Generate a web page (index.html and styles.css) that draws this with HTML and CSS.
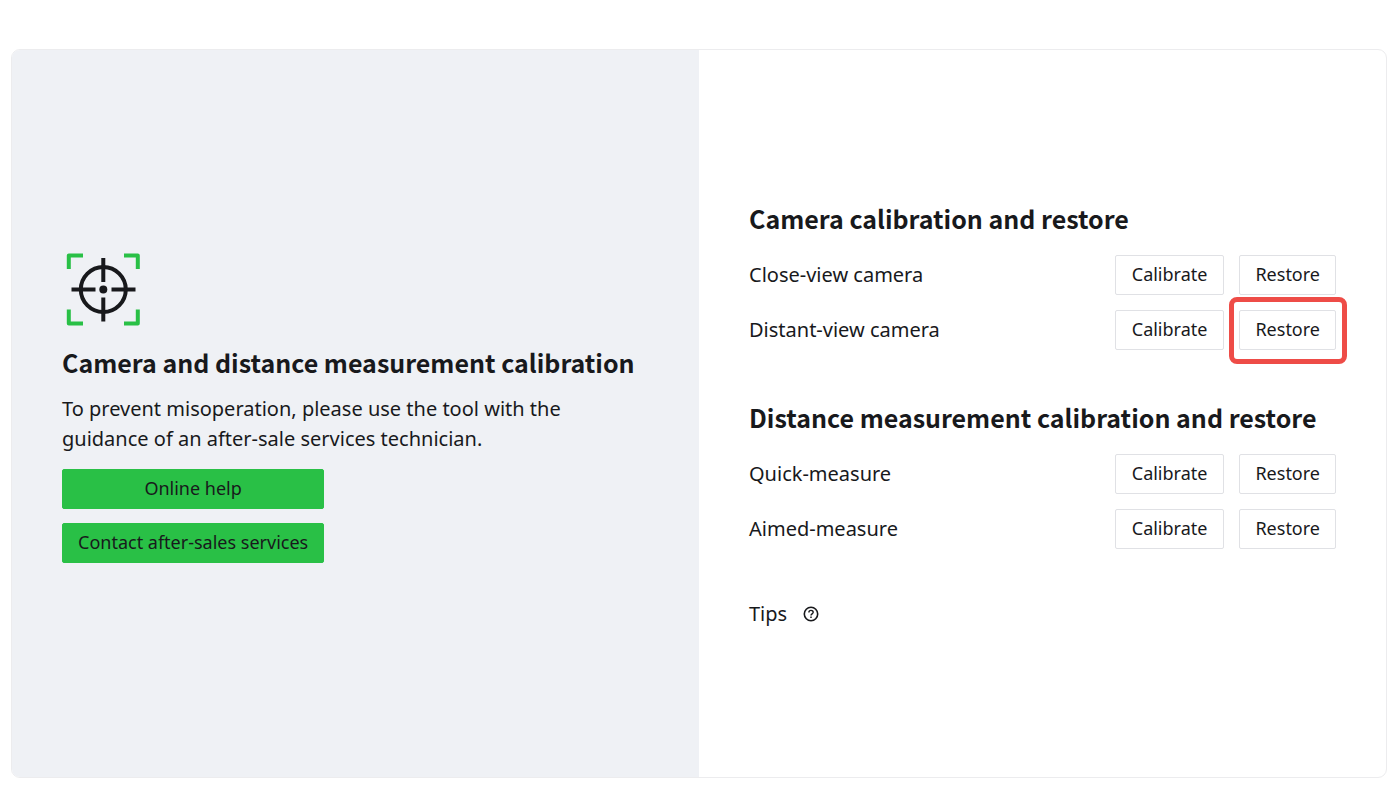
FILE: index.html
```html
<!DOCTYPE html>
<html lang="en">
<head>
<meta charset="utf-8">
<meta name="viewport" content="width=device-width, initial-scale=1">
<title>Camera and distance measurement calibration</title>
<link rel="stylesheet" href="styles.css">
</head>
<body>
<main class="card">
  <section class="intro">
    <svg class="target" viewBox="0 0 82 82" fill="none" aria-hidden="true">
      <path d="M6.800 21V7.500H21M62 7.500H75.800V21M75.800 61.500V75.500H62M21 75.500H6.800V61.500" stroke="#29c046" stroke-width="4" stroke-linejoin="round"/>
      <circle cx="41.300" cy="41.500" r="22.500" stroke="#18191c" stroke-width="4"/>
      <path d="M41.300 10V34M41.300 49.500V73.500M9.500 41.500H33.500M49.500 41.500H73.500" stroke="#18191c" stroke-width="4"/>
      <circle cx="41.300" cy="41.500" r="4" fill="#18191c"/>
    </svg>
    <h1 class="title">Camera and distance measurement calibration</h1>
    <p class="text">To prevent misoperation, please use the tool with the guidance of an after-sale services technician.</p>
    <div class="actions">
      <button class="button primary" type="button">Online help</button>
      <button class="button primary" type="button">Contact after-sales services</button>
    </div>
  </section>
  <section class="panel">
    <div class="group">
      <h2 class="title">Camera calibration and restore</h2>
      <div class="row">
        <span class="label" id="close">Close-view camera</span>
        <button class="button calibrate" type="button" aria-describedby="close">Calibrate</button>
        <button class="button" type="button" aria-describedby="close">Restore</button>
      </div>
      <div class="row">
        <span class="label" id="distant">Distant-view camera</span>
        <button class="button calibrate" type="button" aria-describedby="distant">Calibrate</button>
        <button class="button highlighted" type="button" aria-describedby="distant">Restore</button>
      </div>
    </div>
    <div class="group">
      <h2 class="title">Distance measurement calibration and restore</h2>
      <div class="row">
        <span class="label" id="quick">Quick-measure</span>
        <button class="button calibrate" type="button" aria-describedby="quick">Calibrate</button>
        <button class="button" type="button" aria-describedby="quick">Restore</button>
      </div>
      <div class="row">
        <span class="label" id="aimed">Aimed-measure</span>
        <button class="button calibrate" type="button" aria-describedby="aimed">Calibrate</button>
        <button class="button" type="button" aria-describedby="aimed">Restore</button>
      </div>
    </div>
    <div class="tips">
      <span>Tips</span>
      <button class="help" type="button" aria-label="Show tips">
        <svg class="help-icon" viewBox="0 0 16 16" fill="none" stroke="#18191c" aria-hidden="true">
          <circle cx="8" cy="8" r="6.700" stroke-width="1.600"/>
          <path d="M5.900 6.500C5.900 3.700 10.200 3.800 10.200 6.300C10.200 7.900 8 7.900 8 9.500" stroke-width="1.400"/>
          <path d="M8 10.500V12" stroke-width="1.500"/>
        </svg>
      </button>
    </div>
  </section>
</main>
</body>
</html>
```
FILE: styles.css
```css
* {
  box-sizing: border-box;
}

body {
  margin: 0;
  padding: 49px 13px 30px 11px;
  background: #fff;
  color: #18191c;
  font-family: "Noto Sans", "Open Sans", sans-serif;
  font-size: 20px;
  line-height: 30px;
}

.card {
  display: grid;
  grid-template-columns: 1fr 1fr;
  min-height: calc(100vh - 79px);
  border: 1px solid #ececee;
  border-radius: 9px;
  overflow: hidden;
}

.intro,
.panel {
  display: flex;
  flex-direction: column;
  justify-content: center;
  padding: 0 50px;
}

.intro {
  padding-bottom: 16px;
  background: #eff1f5;
}

.target {
  width: 82px;
  height: 82px;
  margin-bottom: 15px;
}

.title {
  margin: 0;
  font-family: "Noto Sans CJK SC", "Noto Sans", sans-serif;
  font-size: 25px;
  font-weight: 700;
  line-height: 34px;
}

.text {
  max-width: 530px;
  margin: 15px 0;
}

.actions {
  display: grid;
  gap: 14px;
  width: fit-content;
}

.button {
  height: 40px;
  padding: 0 15px 2px;
  border: 1px solid #e0e1e5;
  border-radius: 2px;
  background: #fff;
  color: inherit;
  font-family: inherit;
  font-size: 18px;
  line-height: 24px;
}

.calibrate {
  padding-inline: 16px;
}

.primary {
  border-color: #29c046;
  background: #29c046;
}

.highlighted {
  position: relative;
}

.highlighted::after {
  content: "";
  position: absolute;
  inset: -14px -12px -15px -11px;
  border: 5px solid #ee4c47;
  border-radius: 8px;
}

.panel {
  gap: 50px;
  padding-top: 2px;
}

.group {
  display: grid;
  gap: 15px;
}

.group .title {
  margin-bottom: 5px;
}

.row {
  display: flex;
  align-items: center;
  gap: 15px;
}

.label {
  flex: 1;
}

.tips {
  display: flex;
  align-items: center;
  gap: 16px;
}

.help {
  display: flex;
  padding: 0;
  border: 0;
  background: none;
}

.help-icon {
  width: 16px;
  height: 16px;
}
```
